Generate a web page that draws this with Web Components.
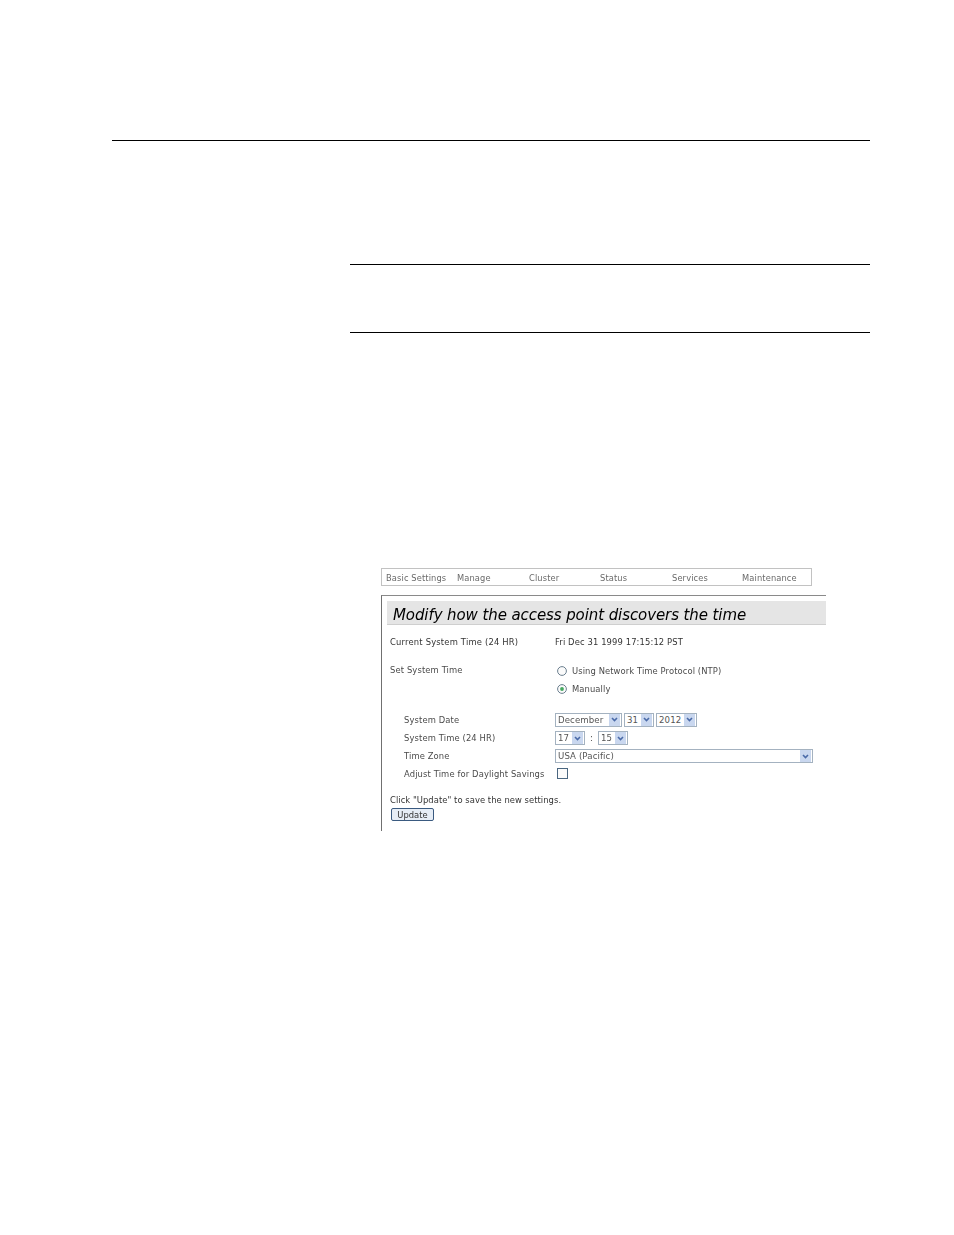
<!DOCTYPE html>
<html>
<head>
<meta charset="utf-8">
<title>Manual page</title>
<style>
  html, body { margin: 0; background: #fff; }
</style>
</head>
<body>
<manual-page>
  <time-figure></time-figure>
</manual-page>

<script>
class ManualPage extends HTMLElement {
  constructor() {
    super();
    this.attachShadow({ mode: 'open' });
  }
  connectedCallback() {
    this.shadowRoot.innerHTML = `
      <style>
        :host { display: block; width: 954px; height: 1235px; box-sizing: border-box; padding: 140px 84px 0 112px; background: #fff; }
        .rule { height: 1px; background: #000; }
        .body { margin-left: 238px; }
        .note { margin-top: 123px; height: 67px; border-top: 1px solid #000; border-bottom: 1px solid #000; }
        .figure { margin: 235px 0 0 31px; }
      </style>
      <div class="rule"></div>
      <div class="body">
        <div class="note"></div>
        <div class="figure"><slot></slot></div>
      </div>
    `;
  }
}

class TopNav extends HTMLElement {
  constructor() {
    super();
    this.attachShadow({ mode: 'open' });
  }
  connectedCallback() {
    this.shadowRoot.innerHTML = `
      <style>
        :host { display: grid; grid-template-columns: 71px 72px 71px 72px 70px 1fr; align-items: center; box-sizing: border-box; width: 431px; height: 18px; padding: 1px 0 0 4px; border: 1px solid #c2c2c2; color: #6a6a6a; font: 8.3px "DejaVu Sans", sans-serif; letter-spacing: .12px; }
      </style>
      <span>Basic Settings</span><span>Manage</span><span>Cluster</span><span>Status</span><span>Services</span><span>Maintenance</span>
    `;
  }
}

class FakeSelect extends HTMLElement {
  constructor() {
    super();
    this.attachShadow({ mode: 'open' });
  }
  connectedCallback() {
    this.shadowRoot.innerHTML = `
      <style>
        :host { display: flex; align-items: center; justify-content: space-between; box-sizing: border-box; height: 14px; padding: 0 1px 0 2px; border: 1px solid #a4b2c0; background: #fff; color: #555; font: 8.6px "DejaVu Sans", sans-serif; letter-spacing: .1px; }
        .btn { width: 11px; height: 12px; display: flex; align-items: center; justify-content: center; background: #c9d7ef; }
      </style>
      <span><slot></slot></span>
      <span class="btn"><svg width="7" height="5" viewBox="0 0 7 5"><path d="M1 1l2.5 2.5L6 1" fill="none" stroke="#4a6aa8" stroke-width="1.6"/></svg></span>
    `;
  }
}

class RadioOption extends HTMLElement {
  constructor() {
    super();
    this.attachShadow({ mode: 'open' });
  }
  connectedCallback() {
    const on = this.hasAttribute('checked');
    this.shadowRoot.innerHTML = `
      <style>
        :host { display: flex; align-items: center; gap: 5px; margin-left: 2px; letter-spacing: .09px; }
        svg { display: block; flex: none; }
      </style>
      <svg width="10" height="10" viewBox="0 0 10 10">
        <circle cx="5" cy="5" r="4.4" fill="#fbfbfb" stroke="#6b7f8f" stroke-width="1"/>
        ${on ? '<circle cx="5" cy="5" r="1.9" fill="#46a860"/>' : ''}
      </svg>
      <span><slot></slot></span>
    `;
  }
}

class TimeFigure extends HTMLElement {
  constructor() {
    super();
    this.attachShadow({ mode: 'open' });
  }
  connectedCallback() {
    this.shadowRoot.innerHTML = `
      <style>
        :host { display: block; width: 445px; color: #4a4a4a; font: 8.4px "DejaVu Sans", sans-serif; letter-spacing: .12px; filter: blur(.25px); }
        .panel { margin-top: 9px; height: 236px; box-sizing: border-box; padding: 5px 0 0 5px; border-left: 1px solid #707070; border-top: 1px solid #8a8a8a; }
        h1 { margin: 0; height: 24px; padding: 1px 0 0 6px; background: #e5e5e5; border-bottom: 1px solid #cfcfcf; box-sizing: border-box; color: #000; font: italic 15px/26px "DejaVu Sans", sans-serif; letter-spacing: -.09px; }
        .content { margin-left: 3px; }
        .row { display: grid; grid-template-columns: 165px 1fr; align-items: center; }
        .current { margin-top: 10px; height: 14px; color: #333; letter-spacing: .19px; }
        .current span + span { letter-spacing: .12px; }
        .set { margin-top: 14px; height: 36px; align-items: start; }
        .set > span { margin-top: 2px; }
        .choices { display: flex; flex-direction: column; gap: 8px; margin-top: 3px; }
        .settings { margin: 13px 0 0 14px; display: grid; grid-template-columns: 151px 1fr; grid-template-rows: 15px 14px 14px 13px; row-gap: 4px; align-items: center; }
        .sel { display: flex; align-items: center; gap: 2px; }
        .wide { width: 258px; }
        .colon { width: 13px; text-align: center; }
        .box { width: 11px; height: 11px; box-sizing: border-box; margin-left: 2px; border: 1px solid #4a6680; background: #fbfbfb; }
        .save { margin-top: 15px; color: #333; letter-spacing: .05px; }
        button { display: block; margin: 3px 0 0 1px; width: 43px; height: 13px; padding: 0; box-sizing: border-box; border: 1px solid #3a5a80; border-radius: 2px; background: #e6edf6; color: #333; font: inherit; line-height: 10px; }
      </style>
      <top-nav></top-nav>
      <div class="panel">
        <h1>Modify how the access point discovers the time</h1>
        <div class="content">
          <div class="row current"><span>Current System Time (24 HR)</span><span>Fri Dec 31 1999 17:15:12 PST</span></div>
          <div class="row set">
            <span>Set System Time</span>
            <div class="choices">
              <radio-option>Using Network Time Protocol (NTP)</radio-option>
              <radio-option checked>Manually</radio-option>
            </div>
          </div>
          <div class="settings">
            <span>System Date</span>
            <div class="sel">
              <fake-select style="width:67px">December</fake-select>
              <fake-select style="width:30px">31</fake-select>
              <fake-select style="width:41px">2012</fake-select>
            </div>
            <span>System Time (24 HR)</span>
            <div class="sel" style="gap:0">
              <fake-select style="width:30px">17</fake-select>
              <span class="colon">:</span>
              <fake-select style="width:30px">15</fake-select>
            </div>
            <span>Time Zone</span>
            <div class="sel"><fake-select class="wide">USA (Pacific)</fake-select></div>
            <span>Adjust Time for Daylight Savings</span>
            <div class="box"></div>
          </div>
          <div class="save">Click "Update" to save the new settings.</div>
          <button>Update</button>
        </div>
      </div>
    `;
  }
}

customElements.define('manual-page', ManualPage);
customElements.define('top-nav', TopNav);
customElements.define('fake-select', FakeSelect);
customElements.define('radio-option', RadioOption);
customElements.define('time-figure', TimeFigure);
</script>
</body>
</html>
